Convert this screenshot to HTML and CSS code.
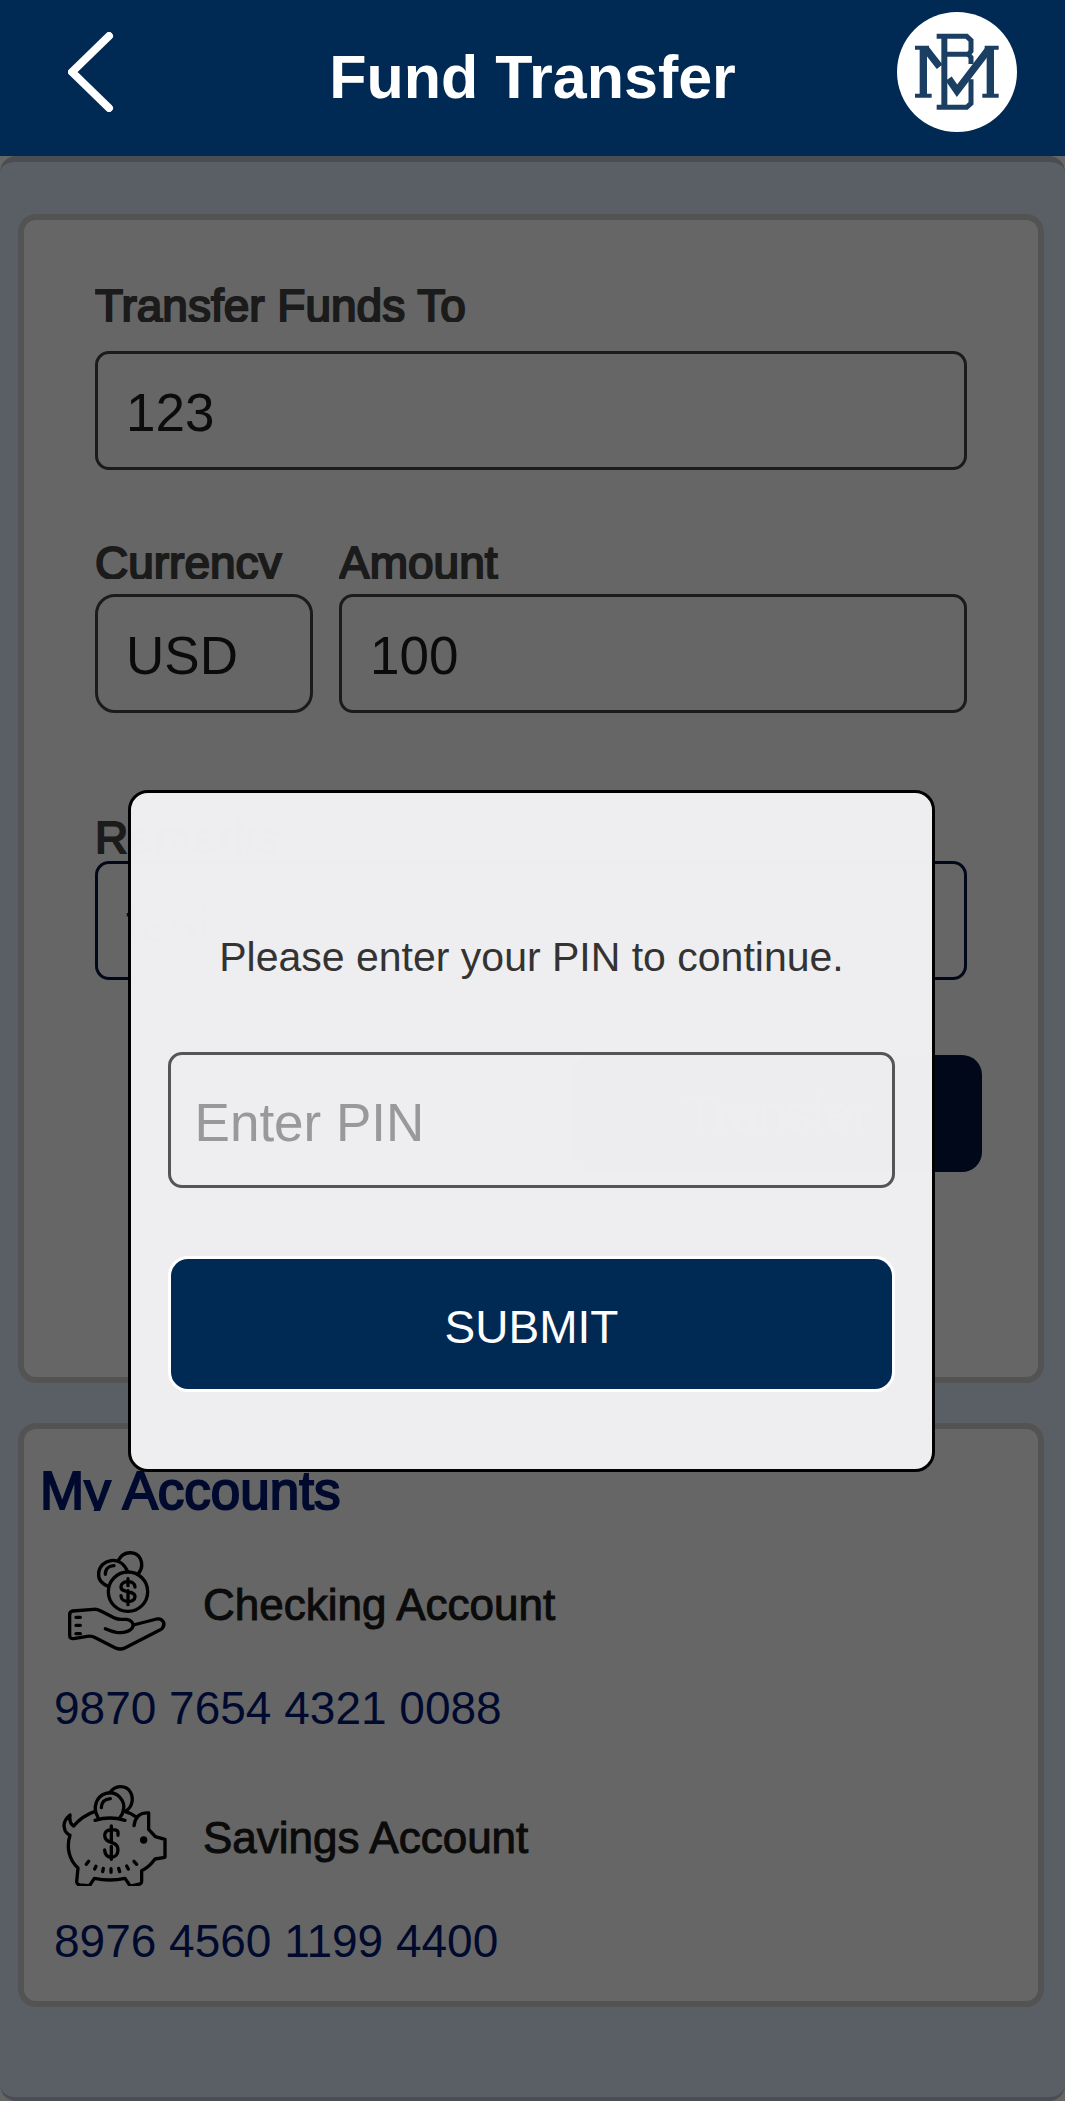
FILE: index.html
```html
<!DOCTYPE html>
<html lang="en">
<head>
<meta charset="UTF-8">
<meta name="viewport" content="width=device-width, initial-scale=1">
<title>Fund Transfer</title>
<link rel="stylesheet" href="styles.css">
</head>
<body>
	<header class="header">
		<button type="button" class="back" aria-label="Back">
			<svg viewBox="0 0 46 80" width="46" height="80"><path d="M41 4L4 40L41 76"/></svg>
		</button>
		<h1>Fund Transfer</h1>
		<svg class="logo" viewBox="111 36 360 360" role="img" aria-label="Bank logo">
			<circle cx="291" cy="216" r="180" fill="#fff"/>
			<g fill="none" stroke="#1a3f63">
				<path stroke-width="18" d="M253 104V326"/>
				<path stroke-width="15" d="M230 109H320L333 121V153L325 163L333 172V192M230 322H320L333 310V238M253 163H325"/>
				<path stroke-width="22" d="M190 146V286M391 146V286"/>
				<path stroke-width="12" d="M165 143H207M374 143H416M165 287H215M367 287H416"/>
				<path stroke-width="22" d="M198 148L239 200M266 236L291 272L386 148"/>
			</g>
		</svg>
	</header>

	<main class="main">
		<form class="card transfer">
			<div class="field to">
				<label for="to">Transfer Funds To</label>
				<input type="text" id="to" value="123">
			</div>
			<div class="row">
				<div class="field currency">
					<label for="currency">Currency</label>
					<select id="currency"><option>USD</option></select>
				</div>
				<div class="field amount">
					<label for="amount">Amount</label>
					<input type="text" id="amount" value="100">
				</div>
			</div>
			<div class="field remarks">
				<label for="remarks">Remarks</label>
				<input type="text" id="remarks" value="test">
			</div>
			<button type="button" class="transfer_btn">Transfer</button>
		</form>

		<section class="card accounts">
			<h2>My Accounts</h2>
			<div class="account">
				<div class="account_name">
					<!-- hand with coins -->
					<svg class="icon" viewBox="63 62 324 306">
						<path d="M205 168C184 160 174 145 176 127C180 88 240 70 263 124"/>
						<path d="M237 87C251 62 288 60 301 85C309 104 304 120 294 131"/>
						<path d="M196 132C196 116 207 106 222 106"/>
						<circle cx="264" cy="184" r="59"/>
						<path d="M285 170C285 148 243 148 243 170C243 190 285 178 285 199C285 219 243 219 243 196M264 145V166M264 181V223"/>
						<path d="M89 252Q89 244 98 242L160 237Q171 236 181 241L222 262Q232 267 244 267H260C274 269 281 279 279 288C273 304 250 309 229 306Q214 303 196 295"/>
						<path d="M280 284L350 266C368 263 377 280 368 292Q366 296 358 300L256 352Q241 360 225 352L166 322Q155 316 142 318L101 325Q89 326 89 315V252"/>
						<path d="M108 261H121M108 285H121M108 310H121"/>
					</svg>
					<h3>Checking Account</h3>
				</div>
				<p>9870 7654 4321 0088</p>
			</div>
			<div class="account">
				<div class="account_name">
					<!-- piggy bank -->
					<svg class="icon" viewBox="63 62 324 306">
						<path d="M174 162C157 134 168 99 198 90C231 81 257 112 250 140Q248 154 240 162"/>
						<path d="M210 88C223 65 258 63 271 86C282 105 277 132 257 143"/>
						<path d="M184 133C185 115 195 107 211 106M165 171Q210 157 255 171"/>
						<path d="M165 144Q127 157 101 188Q87 180 90 155Q68 174 73 193Q75 209 90 216C78 253 88 290 114 314L110 355Q110 363 119 365L143 367Q151 367 153 360L163 345Q210 355 255 345L266 361Q268 367 278 367L300 362Q305 360 305 353V322Q327 312 345 287L375 282V228L346 220L326 198V149C303 146 286 158 282 187M255 145Q274 149 290 162"/>
						<path d="M234 216V207C234 195 194 195 194 216C194 244 234 230 234 259C234 289 194 289 194 260M214 188V233M214 249V288"/>
						<path d="M146 294L139 303M168 309L164 317M190 315L188 325M213 316V327M236 315L239 325M260 308L265 317M282 294L290 303"/>
						<circle cx="311" cy="230" r="6" fill="#000"/>
					</svg>
					<h3>Savings Account</h3>
				</div>
				<p>8976 4560 1199 4400</p>
			</div>
		</section>

		<div class="overlay">
			<form class="modal" role="dialog" aria-modal="true" aria-labelledby="pin_label">
				<label for="pin" id="pin_label">Please enter your PIN to continue.</label>
				<input type="password" id="pin" placeholder="Enter PIN">
				<button type="button">SUBMIT</button>
			</form>
		</div>
	</main>
</body>
</html>
```

FILE: styles.css
```css
*{
	box-sizing: border-box;
}
body{
	margin: 0;
	min-height: 100vh;
	display: flex;
	flex-direction: column;
	background: #fff;
	font-family: "Liberation Sans", Arial, sans-serif;
}
h1,h2,h3,p{
	margin: 0;
}
input,select,button{
	font-family: inherit;
	margin: 0;
}

/* header */
.header{
	display: grid;
	grid-template-columns: 1fr auto 1fr;
	align-items: center;
	padding: 12px 48px 24px;
	background: #002a54;
	color: #fff;
}
.header h1{
	padding-top: 10px;
	font-size: 61px;
	line-height: 70px;
}
.back{
	justify-self: start;
	padding: 0 20px;
	border: none;
	background: none;
	line-height: 0;
}
.back path{
	fill: none;
	stroke: #fff;
	stroke-width: 8;
	stroke-linecap: round;
	stroke-linejoin: round;
}
.logo{
	justify-self: end;
	width: 120px;
	height: 120px;
}

/* page */
.main{
	position: relative;
	flex: 1;
	padding: 52px 21px 89px 18px;
	border: solid #b8c4d0;
	border-width: 6px 0 4px;
	border-radius: 16px;
	background: #e1edff;
}
.card{
	border: 6px solid #cfcfcf;
	border-radius: 18px;
	background: #fff;
}
.transfer{
	display: flex;
	flex-direction: column;
	padding: 61px 71px 205px;
}
.row{
	display: flex;
	gap: 26px;
	margin: 68px 0 100px;
}
.field{
	display: flex;
	flex-direction: column;
	gap: 15px;
}
.to{
	gap: 29px;
}
.remarks{
	gap: 7px;
}
.currency{
	width: 25%;
}
.amount{
	flex: 1;
}
.field label{
	height: 41px;
	overflow: hidden;
	color: #444;
	font-size: 46px;
	line-height: 50px;
	-webkit-text-stroke: 2px #444;
}
.field input,.field select{
	width: 100%;
	height: 119px;
	padding: 4px 28px 0;
	border: 3px solid #444;
	border-radius: 14px;
	background: none;
	color: #1c1c1c;
	font-size: 53px;
}
.field select{
	appearance: none;
	border-radius: 20px;
}
.field #remarks{
	border-color: #001440;
}
.transfer_btn{
	align-self: flex-end;
	width: 409px;
	height: 117px;
	margin: 75px -15px 0 0;
	border: none;
	border-radius: 20px;
	background: #001440;
	color: #fff;
	font-size: 50px;
}

/* accounts */
.accounts{
	margin-top: 40px;
	padding: 34px 16px 35px;
}
.accounts h2{
	height: 48px;
	margin-bottom: 40px;
	overflow: hidden;
	color: #001973;
	font-size: 53px;
	font-weight: normal;
	line-height: 56px;
	-webkit-text-stroke: 2px #001973;
}
.account + .account{
	margin-top: 51px;
}
.account_name{
	display: flex;
	align-items: center;
	gap: 34px;
	padding-left: 21px;
}
.account h3{
	padding-top: 5px;
	color: #1c1c1c;
	font-size: 44px;
	font-weight: normal;
	line-height: 50px;
	-webkit-text-stroke: 1px #1c1c1c;
}
.account p{
	margin-top: 30px;
	padding-left: 14px;
	color: #001973;
	font-size: 46px;
	line-height: 50px;
}
.icon{
	width: 108px;
	height: 102px;
	fill: none;
	stroke: #000;
	stroke-width: 10;
	stroke-linecap: round;
	stroke-linejoin: round;
}

/* pin dialog */
.overlay{
	position: absolute;
	inset: -6px 0 -4px;
	display: flex;
	align-items: center;
	justify-content: center;
	padding: 4px 2px 0 0;
	background: rgba(0,0,0,.6);
}
.modal{
	display: flex;
	flex-direction: column;
	width: 76%;
	padding: 139px 37px 77px;
	border: 3px solid #000;
	border-radius: 20px;
	background: rgba(240,239,241,.99);
}
.modal label{
	color: #333;
	font-size: 41px;
	line-height: 50px;
	text-align: center;
}
.modal input{
	height: 136px;
	margin: 70px 0 68px;
	padding: 5px 24px 0;
	border: 3px solid #555;
	border-radius: 14px;
	background: none;
	font-size: 53px;
}
.modal input::placeholder{
	color: #999;
}
.modal button{
	height: 136px;
	padding-top: 8px;
	border: 3px solid #fff;
	border-radius: 20px;
	background: #002a54;
	color: #fff;
	font-size: 46px;
}
```
